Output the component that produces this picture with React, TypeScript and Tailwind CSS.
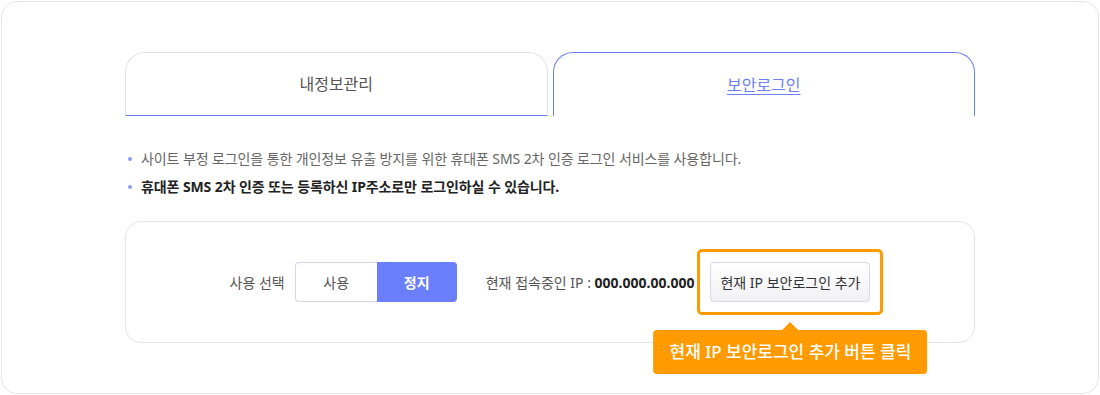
import React from "react";

const font = { fontFamily: '"Noto Sans", "Noto Sans CJK KR", sans-serif' };

const App: React.FC = () => {
  return (
    <div style={font} className="w-[1100px] h-[395px] bg-white p-px">
      <div className="h-[393px] rounded-[16px] border border-[#e4e4ef] bg-white pt-[50px]">
        <div className="mx-auto w-[850px]">
          {/* tabs */}
          <div className="grid grid-cols-2 gap-[5px]">
            <div className="flex h-[64px] items-center justify-center rounded-t-[20px] border border-b border-[#e3e3ee] border-b-[#6b7ff5] text-[16px] text-[#555]">
              내정보관리
            </div>
            <div className="flex h-[64px] items-center justify-center rounded-t-[20px] border border-b-0 border-[#6b7ff5] text-[16px] text-[#6b7ff5] underline underline-offset-[3px]">
              보안로그인
            </div>
          </div>

          {/* notes */}
          <ul className="mt-[33px] space-y-[8px] pl-[3px] text-[14px]">
            <li className="flex items-center gap-[9px] text-[#666] leading-[20px] tracking-[-0.1px]">
              <span className="h-[4px] w-[4px] rounded-full bg-[#8b9cf7]" />
              사이트 부정 로그인을 통한 개인정보 유출 방지를 위한 휴대폰 SMS 2차 인증 로그인 서비스를 사용합니다.
            </li>
            <li className="flex items-center gap-[9px] font-bold text-[#222] leading-[20px] tracking-[-0.1px]">
              <span className="h-[4px] w-[4px] rounded-full bg-[#8b9cf7]" />
              휴대폰 SMS 2차 인증 또는 등록하신 IP주소로만 로그인하실 수 있습니다.
            </li>
          </ul>

          {/* settings box */}
          <div className="mt-[24px] flex h-[122px] items-center justify-center rounded-[16px] border border-[#e4e4ef] text-[14px]">
            <span className="text-[#555]">사용 선택</span>
            <div className="ml-[10px] flex h-[40px]">
              <button className="w-[82px] rounded-l-[4px] border border-r-0 border-[#d6d6e4] bg-white text-[#555]">
                사용
              </button>
              <button className="w-[80px] rounded-r-[4px] bg-[#6b7ffd] font-bold text-white">
                정지
              </button>
            </div>
            <span className="ml-[29px] whitespace-nowrap text-[#555]">
              현재 접속중인 IP : <span className="font-bold text-[#222]">000.000.00.000</span>
            </span>
            <div className="relative ml-[16px]">
              <div className="absolute -inset-[13px] rounded-[5px] border-[3px] border-[#ff9a00] bg-white" />
              <button className="relative h-[40px] w-[160px] rounded-[4px] border border-[#d8d8e6] bg-gradient-to-b from-white to-[#f1f1f5] text-[#333]">
                현재 IP 보안로그인 추가
              </button>
              {/* tooltip */}
              <div className="absolute left-1/2 top-[68px] -translate-x-1/2">
                <div className="absolute -top-[8px] left-1/2 h-0 w-0 -translate-x-1/2 border-x-[8px] border-b-[8px] border-x-transparent border-b-[#ff9a00]" />
                <div className="flex h-[44px] items-center whitespace-nowrap rounded-[4px] bg-[#ff9a00] px-[16px] text-[17px] font-medium text-white">
                  현재 IP 보안로그인 추가 버튼 클릭
                </div>
              </div>
            </div>
          </div>
        </div>
      </div>
    </div>
  );
};

export default App;
